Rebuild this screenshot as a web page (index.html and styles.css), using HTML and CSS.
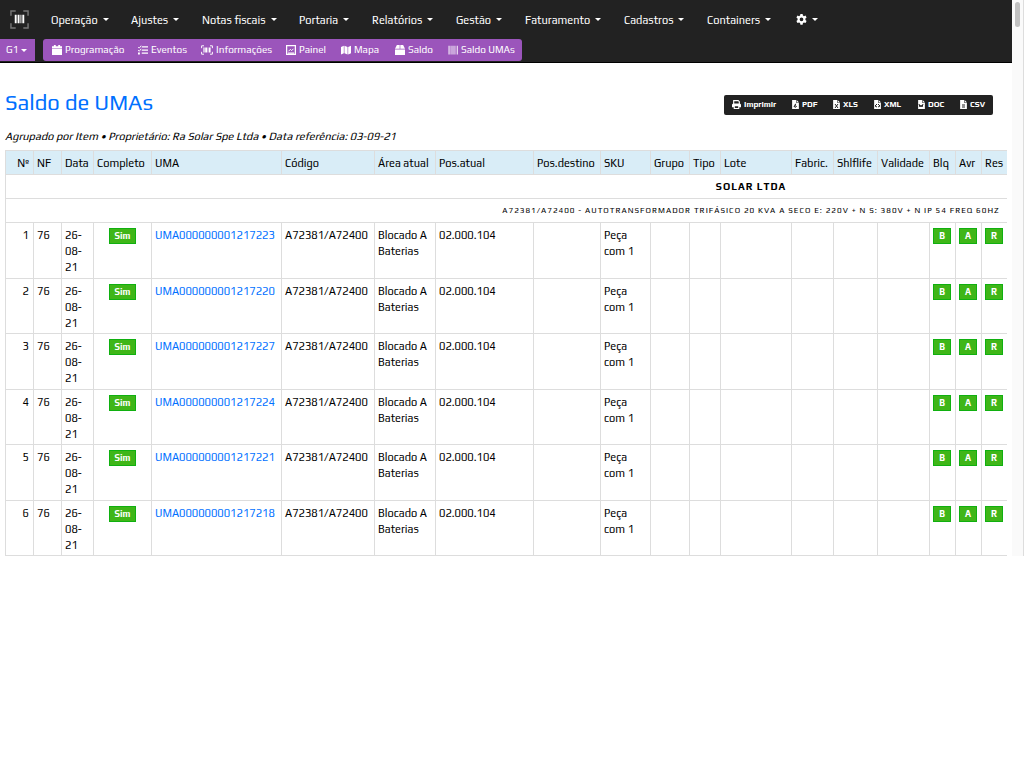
FILE: index.html
```html
<!DOCTYPE html>
<html lang="pt-BR">
<head>
<meta charset="utf-8">
<title>Saldo de UMAs</title>
<link rel="stylesheet" href="styles.css">
</head>
<body>
<svg class="symbols" aria-hidden="true">
  <symbol id="i-calendar" viewBox="0 0 16 16"><path d="M3 0h3v2h4V0h3v2h3v3H0V2h3zM0 6h16v10H0z"/></symbol>
  <symbol id="i-tasks" viewBox="0 0 16 16"><path d="M6 2h10v2H6zM6 7h10v2H6zM6 12h10v2H6zM0 12h3v3H0z"/><path d="M0 3l2 2 3-4M0 8l2 2 3-4" fill="none" stroke="currentColor" stroke-width="1.4"/></symbol>
  <symbol id="i-scan" viewBox="0 0 20 16"><path d="M1 5V1h4M15 1h4v4M19 11v4h-4M5 15H1v-4" fill="none" stroke="currentColor" stroke-width="1.6"/><path d="M4 4h2v8H4zM7 4h3v8H7zM11 4h1v8h-1zM13 4h3v8h-3z"/></symbol>
  <symbol id="i-panel" viewBox="0 0 16 16"><path d="M1 1h14v14H1z" fill="none" stroke="currentColor" stroke-width="2"/><path d="M4 10l3-3 2 2 3-3" fill="none" stroke="currentColor" stroke-width="1.6"/><path d="M3 12h10v2H3z"/></symbol>
  <symbol id="i-map" viewBox="0 0 16 16"><path d="M0 3l4.500-2v12L0 15zM5.500 1l5 2v12l-5-2zM11.500 3L16 1v12l-4.500 2z"/></symbol>
  <symbol id="i-box" viewBox="0 0 16 16"><path d="M3 0h4.500v6H0zM8.500 0H13l3 6H8.500zM0 7h16v9H0z"/></symbol>
  <symbol id="i-barcode" viewBox="0 0 16 16"><path d="M0 1h1v14H0zM2 1h2v14H2zM5 1h1v14H5zM7 1h2v14H7zM10 1h1v14h-1zM12 1h1v14h-1zM14 1h2v14h-2z" opacity=".75"/></symbol>
  <symbol id="i-print" viewBox="0 0 16 16"><path d="M3 7V1h8l2 2v4" fill="none" stroke="currentColor" stroke-width="2"/><path d="M2 6h12l2 2v5h-3v3H3v-3H0V8zM5 11v3h6v-3z" fill-rule="evenodd"/></symbol>
  <symbol id="i-file" viewBox="0 0 12 16"><path d="M0 0h7v5h5v11H0zM8 0l4 4H8z"/></symbol>
  <symbol id="i-gear" viewBox="0 0 16 16"><path fill-rule="evenodd" d="M6.400 0h3.200l.5 2.300 1.500.8 2.200-.8 1.600 2.800-1.700 1.600v1.900l1.700 1.600-1.600 2.800-2.200-.8-1.500.9-.5 2.400H6.400l-.5-2.400-1.500-.9-2.200.8-1.600-2.800 1.700-1.600V6.700L.6 5.100l1.600-2.800 2.200.8 1.500-.8zM8 5a2.700 2.700 0 1 0 0 5.400A2.700 2.700 0 0 0 8 5z"/></symbol>
</svg>

<div class="app">
  <div class="page">
    <header class="topbar">
      <nav class="menu" aria-label="Principal">
        <a class="brand" href="#" aria-label="Início"><svg viewBox="0 0 20 20"><path d="M1 6V1h5M14 1h5v5M19 14v5h-5M6 19H1v-5" fill="none" stroke="#777" stroke-width="1.500"/><path d="M5 5h2v9H5zM8 5h2v9H8zM11 5h1v9h-1zM13 5h2v9h-2z" fill="#fff"/></svg></a>
        <button class="menu-item">Operação</button>
        <button class="menu-item">Ajustes</button>
        <button class="menu-item">Notas fiscais</button>
        <button class="menu-item">Portaria</button>
        <button class="menu-item">Relatórios</button>
        <button class="menu-item">Gestão</button>
        <button class="menu-item">Faturamento</button>
        <button class="menu-item">Cadastros</button>
        <button class="menu-item">Containers</button>
        <button class="menu-item settings" aria-label="Configurações"><svg><use href="#i-gear"/></svg></button>
      </nav>
      <div class="subbar">
        <button class="group">G1</button>
        <nav class="shortcuts" aria-label="Atalhos">
          <a href="#"><svg><use href="#i-calendar"/></svg>Programação</a>
          <a href="#"><svg><use href="#i-tasks"/></svg>Eventos</a>
          <a href="#"><svg class="wide"><use href="#i-scan"/></svg>Informações</a>
          <a href="#"><svg><use href="#i-panel"/></svg>Painel</a>
          <a href="#"><svg><use href="#i-map"/></svg>Mapa</a>
          <a href="#"><svg><use href="#i-box"/></svg>Saldo</a>
          <a href="#"><svg><use href="#i-barcode"/></svg>Saldo UMAs</a>
        </nav>
      </div>
    </header>

    <main class="content">
      <div class="heading">
        <h1>Saldo de UMAs</h1>
        <div class="exports">
          <button><svg><use href="#i-print"/></svg>Imprimir</button>
          <button><svg class="file"><use href="#i-file"/><path d="M2 7c2-4 2-4 1-1s2 0 2 0" class="mark"/></svg>PDF</button>
          <button><svg class="file"><use href="#i-file"/><path d="M2 4l3 4M5 4L2 8" class="mark"/></svg>XLS</button>
          <button><svg class="file"><use href="#i-file"/><path d="M3 4L1 6l2 1M4 4l2 2-2 1" class="mark"/></svg>XML</button>
          <button><svg class="file"><use href="#i-file"/><path d="M1 4l1 3 1-2 1 2 1-3" class="mark"/></svg>DOC</button>
          <button><svg class="file"><use href="#i-file"/><path d="M2 5h3M2 7h3" class="mark"/></svg>CSV</button>
        </div>
      </div>
      <p class="summary">Agrupado por Item • Proprietário: Ra Solar Spe Ltda • Data referência: 03-09-21</p>
      <div class="table-wrap">
        <table>
          <colgroup>
            <col class="w28"><col class="w28"><col class="w32"><col class="w58"><col class="w130"><col class="w93"><col class="w61"><col class="w98"><col class="w67"><col class="w50"><col class="w39"><col class="w31"><col class="w71"><col class="w42"><col class="w44"><col class="w52"><col class="w26"><col class="w26"><col class="w26"><col>
          </colgroup>
          <thead>
            <tr><th class="num">Nº</th><th>NF</th><th>Data</th><th>Completo</th><th>UMA</th><th>Código</th><th>Área atual</th><th>Pos.atual</th><th>Pos.destino</th><th>SKU</th><th>Grupo</th><th>Tipo</th><th>Lote</th><th>Fabric.</th><th>Shlflife</th><th>Validade</th><th>Blq</th><th>Avr</th><th>Res</th><th></th></tr>
          </thead>
          <tbody class="groups">
            <tr><th colspan="20" class="owner">SOLAR LTDA</th></tr>
            <tr><th colspan="20" class="item">A72381/A72400 - AUTOTRANSFORMADOR TRIFÁSICO 20 KVA A SECO E: 220V + N S: 380V + N IP 54 FREQ 60HZ</th></tr>
          </tbody>
          <tbody class="rows">
            <tr><td class="num">1</td><td>76</td><td>26-<br>08-<br>21</td><td class="mid"><span class="tag">Sim</span></td><td><a href="#">UMA000000001217223</a></td><td>A72381/A72400</td><td>Blocado A<br>Baterias</td><td>02.000.104</td><td></td><td>Peça<br>com 1</td><td></td><td></td><td></td><td></td><td></td><td></td><td><span class="tag flag">B</span></td><td><span class="tag flag">A</span></td><td><span class="tag flag">R</span></td><td></td></tr>
            <tr><td class="num">2</td><td>76</td><td>26-<br>08-<br>21</td><td class="mid"><span class="tag">Sim</span></td><td><a href="#">UMA000000001217220</a></td><td>A72381/A72400</td><td>Blocado A<br>Baterias</td><td>02.000.104</td><td></td><td>Peça<br>com 1</td><td></td><td></td><td></td><td></td><td></td><td></td><td><span class="tag flag">B</span></td><td><span class="tag flag">A</span></td><td><span class="tag flag">R</span></td><td></td></tr>
            <tr><td class="num">3</td><td>76</td><td>26-<br>08-<br>21</td><td class="mid"><span class="tag">Sim</span></td><td><a href="#">UMA000000001217227</a></td><td>A72381/A72400</td><td>Blocado A<br>Baterias</td><td>02.000.104</td><td></td><td>Peça<br>com 1</td><td></td><td></td><td></td><td></td><td></td><td></td><td><span class="tag flag">B</span></td><td><span class="tag flag">A</span></td><td><span class="tag flag">R</span></td><td></td></tr>
            <tr><td class="num">4</td><td>76</td><td>26-<br>08-<br>21</td><td class="mid"><span class="tag">Sim</span></td><td><a href="#">UMA000000001217224</a></td><td>A72381/A72400</td><td>Blocado A<br>Baterias</td><td>02.000.104</td><td></td><td>Peça<br>com 1</td><td></td><td></td><td></td><td></td><td></td><td></td><td><span class="tag flag">B</span></td><td><span class="tag flag">A</span></td><td><span class="tag flag">R</span></td><td></td></tr>
            <tr><td class="num">5</td><td>76</td><td>26-<br>08-<br>21</td><td class="mid"><span class="tag">Sim</span></td><td><a href="#">UMA000000001217221</a></td><td>A72381/A72400</td><td>Blocado A<br>Baterias</td><td>02.000.104</td><td></td><td>Peça<br>com 1</td><td></td><td></td><td></td><td></td><td></td><td></td><td><span class="tag flag">B</span></td><td><span class="tag flag">A</span></td><td><span class="tag flag">R</span></td><td></td></tr>
            <tr><td class="num">6</td><td>76</td><td>26-<br>08-<br>21</td><td class="mid"><span class="tag">Sim</span></td><td><a href="#">UMA000000001217218</a></td><td>A72381/A72400</td><td>Blocado A<br>Baterias</td><td>02.000.104</td><td></td><td>Peça<br>com 1</td><td></td><td></td><td></td><td></td><td></td><td></td><td><span class="tag flag">B</span></td><td><span class="tag flag">A</span></td><td><span class="tag flag">R</span></td><td></td></tr>
          </tbody>
        </table>
      </div>
    </main>
  </div>
  <div class="scrollbar"><div class="thumb"></div></div>
</div>
</body>
</html>
```
FILE: styles.css
```css
* { box-sizing: border-box; }
body {
  margin: 0;
  background: #fff;
  color: #000;
  font: 11px/16px Play, "Noto Sans", sans-serif;
}
.symbols { display: none; }
svg { fill: currentColor; flex: none; }
a { color: #0070ff; text-decoration: none; }
button { border: 0; padding: 0; background: none; color: inherit; font: inherit; cursor: pointer; }

.app { display: flex; }
.page { flex: 1; min-width: 0; }

.topbar { background: #222; color: #fff; border-bottom: 1px solid #000; padding-bottom: 1px; }
.menu {
  display: grid;
  grid-template-columns: 41px 80px 71px 97px 73px 84px 69px 99px 83px 89px auto;
  align-items: center;
  justify-content: start;
  height: 39px;
  padding-left: 10px;
}
.brand, .brand svg { display: block; width: 19px; height: 19px; }
.menu-item { display: flex; align-items: center; gap: 5px; white-space: nowrap; }
.menu-item::after, .group::after {
  content: "";
  border: 3px solid transparent;
  border-top-color: currentColor;
  border-bottom: 0;
}
.settings svg { width: 11px; height: 11px; }

.subbar { display: flex; gap: 8px; height: 22px; font-size: 10px; }
.group { display: flex; align-items: center; gap: 3px; width: 35px; padding-left: 6px; background: #9b55bb; }
.shortcuts {
  display: grid;
  grid-template-columns: 86px 63px 85px 55px 54px 53px auto;
  align-items: center;
  padding: 0 7px 0 9px;
  border-radius: 3px;
  background: #9b55bb;
}
.shortcuts a { display: flex; align-items: center; gap: 3px; color: #fff; white-space: nowrap; }
.shortcuts svg { width: 10px; height: 10px; }
.shortcuts .wide { width: 12px; }

.content { padding: 26px 5px 0; }
.heading { display: flex; justify-content: space-between; align-items: center; padding-right: 14px; }
h1 { margin: 0; color: #0070ff; font-size: 22px; line-height: 27px; font-weight: 400; }
.exports {
  display: grid;
  grid-template-columns: 60px 41px 41px 44px 42px auto;
  align-items: center;
  height: 20px;
  margin-top: 4px;
  padding: 0 8px;
  border-radius: 2px;
  background: #222;
  color: #fff;
  font-size: 8px;
  font-weight: 700;
}
.exports button { display: flex; align-items: center; gap: 3px; }
.exports svg { width: 9px; height: 9px; }
.exports .file { width: 7px; }
.mark { fill: none; stroke: #222; }
.summary { margin: 12px 0 6px; font-style: italic; }

.table-wrap { overflow: hidden; }
table { width: 1492px; table-layout: fixed; border-collapse: collapse; }
th, td { border: 1px solid #ddd; padding: 4px 3px; text-align: left; vertical-align: top; font-weight: 400; white-space: nowrap; }
th { padding-bottom: 3px; }
thead th { background: #d9edf7; }
.num { padding-right: 4px; text-align: right; }
.mid { text-align: center; }
.groups th { text-align: center; text-transform: uppercase; letter-spacing: 1px; }
.groups .owner { font-size: 10px; font-weight: 700; }
.groups .item { font-size: 8px; }
.rows td { padding-bottom: 3px; }
.rows tr:nth-child(even) td { padding-bottom: 2px; }
.tag { display: inline-block; padding: 0 5px; border: 1px solid #10b010; background: #3fb618; color: #fff; font-size: 9px; line-height: 14px; font-weight: 700; }
.flag { width: 18px; padding: 0; text-align: center; }

.w26 { width: 26px; } .w28 { width: 28px; } .w31 { width: 31px; } .w32 { width: 32px; }
.w39 { width: 39px; } .w42 { width: 42px; } .w44 { width: 44px; } .w50 { width: 50px; }
.w52 { width: 52px; } .w58 { width: 58px; } .w61 { width: 61px; } .w67 { width: 67px; }
.w71 { width: 71px; } .w93 { width: 93px; } .w98 { width: 98px; } .w130 { width: 130px; }

.scrollbar { width: 12px; padding: 2px 3px; background: #fafafa; border-right: 1px solid #ddd; }
.thumb { height: 25px; border-radius: 3px; background: #c1c1c1; }
```
